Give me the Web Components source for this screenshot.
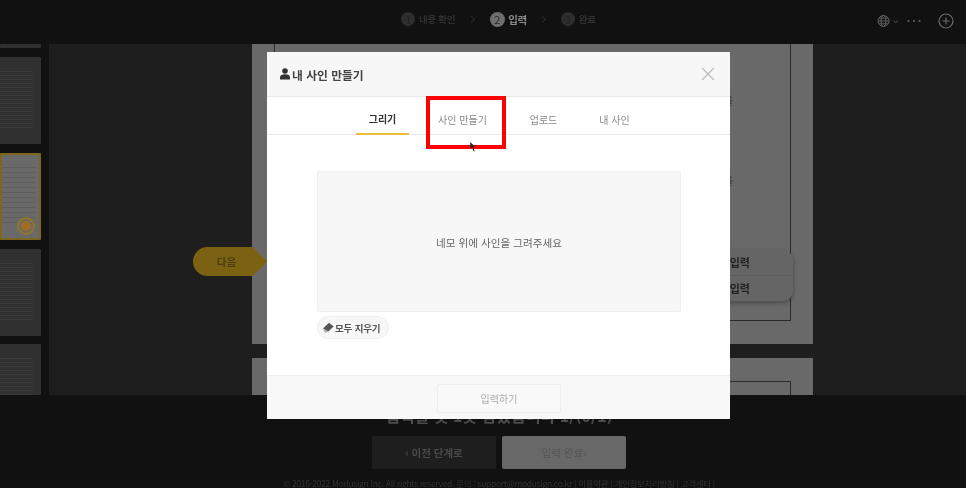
<!DOCTYPE html>
<html lang="ko">
<head>
<meta charset="utf-8">
<title>내 사인 만들기</title>
<style>
  html, body { margin: 0; height: 100%; background: #111; }
  body { width: 966px; height: 488px; overflow: hidden; position: relative; font-family: "Noto Sans CJK KR", "Noto Sans", sans-serif; }
  .screen { display: flex; flex-direction: column; height: 488px; filter: blur(0.45px); position: relative; }
  .work { display: flex; height: 351px; overflow: hidden; background: #1e1e1e; position: relative; }
</style>
</head>
<body>
<div class="screen">
  <step-bar></step-bar>
  <div class="work">
    <thumb-rail></thumb-rail>
    <doc-pages></doc-pages>
    <next-tag>다음</next-tag>
    <field-menu></field-menu>
  </div>
  <page-footer></page-footer>
  <sign-modal></sign-modal>
</div>

<script>
class StepBar extends HTMLElement {
  constructor() {
    super();
    this.attachShadow({ mode: 'open' }).innerHTML = `
    <style>
      :host { display: flex; height: 44px; flex: none; background: #111; color: #303030; font-size: 9.5px; font-weight: 700; position: relative; }
      .steps { display: flex; align-items: center; height: 38px; padding-left: 401px; }
      .step { display: flex; align-items: center; gap: 4px; white-space: nowrap; letter-spacing: -.3px; }
      .num { width: 14px; height: 14px; border-radius: 50%; background: #2e2e2e; color: #222; display: flex; align-items: center; justify-content: center; font-size: 10px; font-weight: 400; }
      .on { color: #8a8a8a; font-size: 10.5px; gap: 3.5px; }
      .on .num { width: 15px; height: 15px; background: #6e6e6e; color: #2a2a2a; font-size: 11px; }
      .sep { width: 5px; height: 5px; box-sizing: border-box; border: solid #2c2c2c; border-width: 1px 1px 0 0; transform: rotate(45deg); }
      .s1 { margin: 0 16px 0 13.5px; }
      .s2 { margin: 0 15.5px 0 13.5px; }
      .tools { display: flex; align-items: center; position: absolute; right: 12px; top: 13px; }
      svg { display: block; }
    </style>
    <div class="steps">
      <div class="step"><span class="num">1</span><span>내용 확인</span></div>
      <span class="sep s1"></span>
      <div class="step on"><span class="num">2</span><span>입력</span></div>
      <span class="sep s2"></span>
      <div class="step"><span class="num">3</span><span>완료</span></div>
    </div>
    <div class="tools">
      <svg width="22" height="14" viewBox="0 0 22 14" fill="none" stroke="#5e5e5e" stroke-width="1">
        <circle cx="6.5" cy="7" r="5.5"/><ellipse cx="6.5" cy="7" rx="2.5" ry="5.5"/><path d="M1 7h11M1.8 4.2h9.4M1.8 9.8h9.4"/>
        <path d="M16.5 6.5l2.2 2.2L21 6.5" stroke="#555"/>
      </svg>
      <svg style="margin-left:8px" width="14" height="14" viewBox="0 0 14 14" fill="#666">
        <circle cx="1.5" cy="7" r="1"/><circle cx="7" cy="7" r="1"/><circle cx="12.5" cy="7" r="1"/>
      </svg>
      <svg style="margin-left:17px" width="16" height="16" viewBox="0 0 16 16" fill="none" stroke="#6a6a6a" stroke-width="1.2">
        <circle cx="8" cy="8" r="7"/><path d="M8 4.4v7.2M4.4 8h7.2"/>
      </svg>
    </div>`;
  }
}
customElements.define('step-bar', StepBar);

class ThumbRail extends HTMLElement {
  constructor() {
    super();
    this.attachShadow({ mode: 'open' }).innerHTML = `
    <style>
      :host { display: flex; flex-direction: column; gap: 9px; width: 41px; padding-right: 8px; flex: none; background: #111; overflow: hidden; }
      .thumb { width: 41px; box-sizing: border-box; flex: none; border-radius: 1px; background-color: #303030;
        background-image: repeating-linear-gradient(#3b3b3b 0 1px, transparent 1px 4px); background-size: 33px 60px; background-repeat: no-repeat; background-position: 0 14px; }
      .cut { height: 4px; background-image: none; }
      .t { height: 87px; }
      .active { background-color: #696969; border: 2px solid #7f661e; position: relative;
        background-image: repeating-linear-gradient(#5d5d5d 0 1px, transparent 1px 5px); background-position: 0 12px; }
      .seal { position: absolute; right: 8px; bottom: 7px; width: 10px; height: 10px; border-radius: 50%; background: #a06d28; box-shadow: 0 0 0 2px #6d6a5c, 0 0 0 4px #92762c; }
    </style>
    <div class="thumb cut"></div>
    <div class="thumb t"></div>
    <div class="thumb t active"><span class="seal"></span></div>
    <div class="thumb t"></div>
    <div class="thumb t" style="margin-top:-1px"></div>`;
  }
}
customElements.define('thumb-rail', ThumbRail);

class DocPages extends HTMLElement {
  constructor() {
    super();
    this.attachShadow({ mode: 'open' }).innerHTML = `
    <style>
      :host { display: flex; flex-direction: column; gap: 14px; width: 561px; margin-left: 203px; flex: none; }
      .page { width: 561px; background: #696969; box-sizing: border-box; padding: 0 22px; flex: none; }
      .first { height: 300px; padding-bottom: 23px; }
      .second { height: 60px; padding-top: 23px; }
      .paper { box-sizing: border-box; height: 100%; width: 517px; border: 1.5px solid #2a2a2a; color: #3a3a3a; font-size: 11px; text-align: right; padding-right: 57px; }
      .first .paper { border-top: 0; }
      .second .paper { border-bottom: 0; }
      p { margin: 0; line-height: 14px; }
    </style>
    <div class="page first"><div class="paper"><p style="padding-top:49px">을</p><p style="padding-top:66px">을</p></div></div>
    <div class="page second"><div class="paper"></div></div>`;
  }
}
customElements.define('doc-pages', DocPages);

class NextTag extends HTMLElement {
  constructor() {
    super();
    this.attachShadow({ mode: 'open' }).innerHTML = `
    <style>
      :host { display: block; position: absolute; left: 193px; top: 203px; width: 74px; height: 29px; }
      div { height: 100%; background: #7b6212; color: #4b3d10; font-size: 10.5px; font-weight: 700; display: flex; align-items: center; justify-content: center; box-sizing: border-box; padding-right: 7px;
        clip-path: path("M14.5 0H60L74 14.5L60 29H14.5A14.5 14.5 0 0 1 14.5 0Z"); }
    </style>
    <div><slot></slot></div>`;
  }
}
customElements.define('next-tag', NextTag);

class FieldMenu extends HTMLElement {
  constructor() {
    super();
    this.attachShadow({ mode: 'open' }).innerHTML = `
    <style>
      :host { display: block; position: absolute; left: 660px; top: 206px; width: 133px; background: #656565; border-radius: 0 10px 10px 0; box-shadow: 0 2px 5px rgba(0,0,0,.3); font-size: 11px; font-weight: 700; color: #222; text-align: right; }
      div { height: 25px; line-height: 25px; padding-right: 43px; }
      div + div { border-top: 1px solid #5c5c5c; }
    </style>
    <div>입력</div><div>입력</div>`;
  }
}
customElements.define('field-menu', FieldMenu);

class PageFooter extends HTMLElement {
  constructor() {
    super();
    this.attachShadow({ mode: 'open' }).innerHTML = `
    <style>
      :host { display: flex; flex-direction: column; align-items: center; height: 93px; box-sizing: border-box; padding-left: 32px; flex: none; background: #111; overflow: hidden; }
      h2 { margin: 7px 0 7px; height: 27px; font-size: 16px; line-height: 27px; font-weight: 700; color: #4c4c4c; white-space: nowrap; }
      .btns { display: flex; gap: 6px; }
      .btn { width: 124px; height: 33px; border-radius: 2px; display: flex; align-items: center; justify-content: center; font-size: 10.5px; font-weight: 700; box-sizing: border-box; }
      .prev { background: #1e1e1e; color: #4a4a4a; }
      .done { background: #686868; color: #555; font-weight: 400; }
      small { display: block; margin-top: 10px; font-size: 8.5px; line-height: 9px; color: #333; white-space: nowrap; letter-spacing: -.3px; }
    </style>
    <h2>입력할 곳 1곳 남았습니다 1/(0/1)</h2>
    <div class="btns"><div class="btn prev">‹ 이전 단계로</div><div class="btn done">입력 완료›</div></div>
    <small>© 2016-2022 Modusign Inc. All rights reserved. 문의 : support@modusign.co.kr | 이용약관 | 개인정보처리방침 | 고객센터 |</small>`;
  }
}
customElements.define('page-footer', PageFooter);

class SignModal extends HTMLElement {
  constructor() {
    super();
    this.attachShadow({ mode: 'open' }).innerHTML = `
    <style>
      :host { display: flex; flex-direction: column; position: absolute; left: 267px; top: 52px; width: 463px; height: 367px; background: #fff; color: #333; border-radius: 1px; }
      header { height: 45px; box-sizing: border-box; flex: none; background: #f7f7f7; border-bottom: 1px solid #e9e9e9; display: flex; align-items: center; padding: 0 15px 0 13px; gap: 2px; font-size: 11.8px; font-weight: 700; color: #444; }
      header span { flex: 1; }
      nav { height: 38px; box-sizing: border-box; flex: none; border-bottom: 1px solid #e9e9e9; display: flex; padding-left: 89px; font-size: 10px; color: #888; }
      nav a { height: 38px; box-sizing: border-box; padding-top: 7px; display: flex; align-items: center; justify-content: center; white-space: nowrap; }
      nav a:nth-child(1) { width: 53px; color: #333; font-weight: 700; border-bottom: 2px solid #e9bd3a; }
      nav a:nth-child(2) { width: 107px; }
      nav a:nth-child(3) { width: 55px; }
      nav a:nth-child(4) { width: 87px; }
      main { flex: 1; padding: 36px 49px 0 50px; }
      .pad { height: 141px; box-sizing: border-box; padding-top: 2px; background: #f7f7f7; border: 1px solid #efefef; border-radius: 2px; display: flex; align-items: center; justify-content: center; font-size: 10.6px; color: #666; }
      .clear { display: inline-flex; align-items: center; gap: 1px; box-sizing: border-box; height: 23px; width: 72px; margin-top: 4px; padding-left: 4px; background: #f7f7f7; border: 1px solid #efefef; border-radius: 12px; font-size: 9.5px; font-weight: 700; letter-spacing: -.15px; color: #555; white-space: nowrap; }
      footer { height: 44px; box-sizing: border-box; flex: none; background: #f8f8f8; border-top: 1px solid #f0f0f0; display: flex; justify-content: center; padding: 8px 0 6px 0; }
      footer div { width: 124px; box-sizing: border-box; margin-left: 1px; background: #f9f9f9; border: 1px solid #eee; border-radius: 2px; display: flex; align-items: center; justify-content: center; font-size: 10px; color: #aaa; }
      .mark { position: absolute; left: 159px; top: 44px; width: 80px; height: 53px; box-sizing: border-box; border: 4px solid #f00; }
      .cursor { position: absolute; left: 203px; top: 90px; }
      svg { display: block; flex: none; }
    </style>
    <header>
      <svg width="10" height="12" viewBox="0 0 10 12" fill="#333"><circle cx="5" cy="3" r="2.8"/><path d="M0 11.5V9.2C0 7.4 2 6.3 5 6.3s5 1.1 5 2.9v2.3Z"/></svg>
      <span>내 사인 만들기</span>
      <svg width="14" height="14" viewBox="0 0 14 14" fill="none" stroke="#bbb" stroke-width="1.2"><path d="M1 1l12 12M13 1L1 13"/></svg>
    </header>
    <nav><a>그리기</a><a>사인 만들기</a><a>업로드</a><a>내 사인</a></nav>
    <main>
      <div class="pad">네모 위에 사인을 그려주세요</div>
      <div class="clear">
        <svg width="12" height="11" viewBox="0 0 12 11"><path d="M7 .8L11.6 4.4 6.4 9.6 1 6.4Z" fill="#555"/><path d="M1 6.4L6.4 9.6 4.6 10.4H3Z" fill="#aaa"/></svg>
        모두 지우기
      </div>
    </main>
    <footer><div>입력하기</div></footer>
    <span class="mark"></span>
    <svg class="cursor" width="6" height="10" viewBox="0 0 6 10" fill="#222"><path d="M0 0L5 4.5 3.2 4.8 4.6 9 3.6 9.6 2.2 5.4 .6 6.6Z"/></svg>`;
  }
}
customElements.define('sign-modal', SignModal);
</script>
</body>
</html>
